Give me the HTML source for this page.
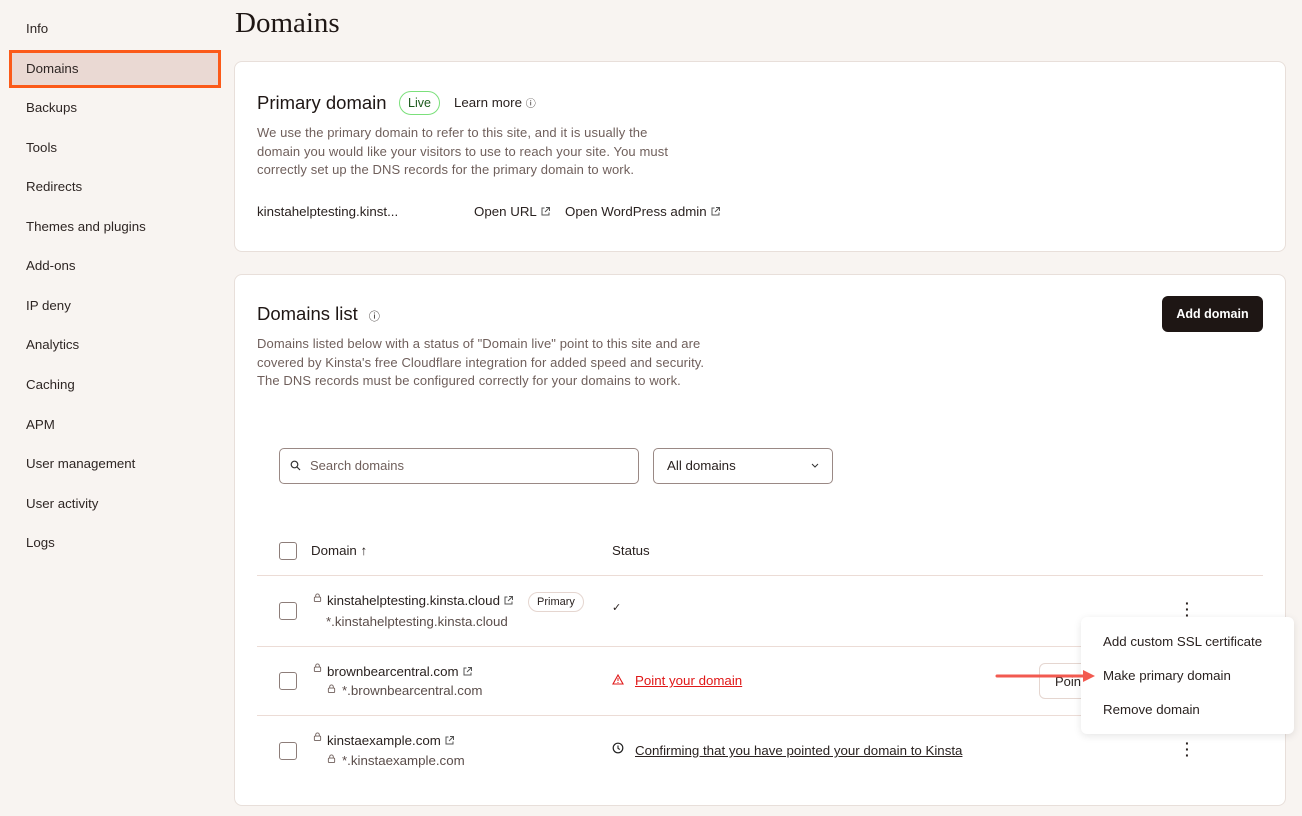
<!DOCTYPE html>
<html><head><meta charset="utf-8"><style>
*{box-sizing:border-box;margin:0;padding:0}
body{width:1302px;height:816px;background:#f8f4f1;font-family:"Liberation Sans",sans-serif;color:#2a2220;position:relative;overflow:hidden}
.a{position:absolute;white-space:nowrap}
.nav{left:26px;font-size:13.3px;color:#2e2624}
.card{position:absolute;background:#fff;border:1px solid #e8dfda;border-radius:8px}
.muted{color:#6f5f5b;font-size:13px;line-height:18.5px;letter-spacing:0.1px}
.cb{position:absolute;width:18px;height:18px;border:1.3px solid #8d7d79;border-radius:3px;background:#fff}
.sm{font-size:13.3px;color:#2a2220}
.sub{font-size:13.3px;color:#5a4d4a}
hr{position:absolute;border:0;border-top:1px solid #ecdcd6;left:257px;width:1006px;height:0}
.ext{display:inline-block;vertical-align:-1px;margin-left:3px}
</style></head><body>
<svg width="0" height="0" style="position:absolute"><defs>
<symbol id="ext" viewBox="0 0 11 11"><path d="M4.5 2H2v7h7V6.5M6 1.5h3.5V5M9.5 1.5L5 6" fill="none" stroke="#555" stroke-width="1"/></symbol>
<symbol id="lock" viewBox="0 0 10 10"><rect x="1.5" y="4.5" width="7" height="5" rx="1" fill="none" stroke="#6f5f5b" stroke-width="1"/><path d="M3 4.5V3a2 2 0 0 1 4 0v1.5" fill="none" stroke="#6f5f5b" stroke-width="1"/></symbol>
</defs></svg>
<div class="a nav" style="top:21px">Info</div>
<div class="a" style="left:9px;top:50px;width:212px;height:38px;background:#ead9d3;border:3px solid #fb5a19"></div>
<div class="a nav" style="top:61px">Domains</div>
<div class="a nav" style="top:100px">Backups</div>
<div class="a nav" style="top:140px">Tools</div>
<div class="a nav" style="top:179px">Redirects</div>
<div class="a nav" style="top:219px">Themes and plugins</div>
<div class="a nav" style="top:258px">Add-ons</div>
<div class="a nav" style="top:298px">IP deny</div>
<div class="a nav" style="top:337px">Analytics</div>
<div class="a nav" style="top:377px">Caching</div>
<div class="a nav" style="top:417px">APM</div>
<div class="a nav" style="top:456px">User management</div>
<div class="a nav" style="top:496px">User activity</div>
<div class="a nav" style="top:535px">Logs</div>

<div class="a" style="left:235px;top:7px;font-family:'Liberation Serif',serif;font-size:29px;color:#1e1614">Domains</div>

<div class="card" style="left:234px;top:61px;width:1052px;height:191px"></div>
<div class="a" style="left:257px;top:92px;font-size:18.5px;color:#1e1614">Primary domain</div>
<div class="a" style="left:399px;top:91px;height:24px;padding:0 8px;border:1px solid #7be07b;border-radius:12px;font-size:12.5px;line-height:22px;color:#1d5a1d">Live</div>
<div class="a sm" style="left:454px;top:95px">Learn more <span style="font-size:10px">ⓘ</span></div>
<div class="a muted" style="left:257px;top:124px">We use the primary domain to refer to this site, and it is usually the<br>domain you would like your visitors to use to reach your site. You must<br>correctly set up the DNS records for the primary domain to work.</div>
<div class="a sm" style="left:257px;top:204px">kinstahelptesting.kinst...</div>
<div class="a sm" style="left:474px;top:204px">Open URL<svg class="ext" width="11" height="11"><use href="#ext"/></svg></div>
<div class="a sm" style="left:565px;top:204px">Open WordPress admin<svg class="ext" width="11" height="11"><use href="#ext"/></svg></div>

<div class="card" style="left:234px;top:274px;width:1052px;height:532px"></div>
<div class="a" style="left:257px;top:303px;font-size:18.5px;color:#1e1614">Domains list <span style="font-size:11px;margin-left:6px">ⓘ</span></div>
<div class="a" style="left:1162px;top:296px;width:101px;height:36px;background:#1e1614;border-radius:6px;color:#fff;font-size:12.5px;font-weight:bold;text-align:center;line-height:36px">Add domain</div>
<div class="a muted" style="left:257px;top:335px">Domains listed below with a status of "Domain live" point to this site and are<br>covered by Kinsta's free Cloudflare integration for added speed and security.<br>The DNS records must be configured correctly for your domains to work.</div>

<div class="a" style="left:279px;top:448px;width:360px;height:36px;border:1px solid #9a8985;border-radius:5px;background:#fff"></div>
<svg class="a" style="left:290px;top:460px" width="11" height="11" viewBox="0 0 11 11"><circle cx="4.5" cy="4.5" r="3.3" fill="none" stroke="#333" stroke-width="1.2"/><path d="M7 7l3 3" stroke="#333" stroke-width="1.2"/></svg>
<div class="a" style="left:310px;top:458px;font-size:13px;color:#6f5f5b">Search domains</div>
<div class="a" style="left:653px;top:448px;width:180px;height:36px;border:1px solid #9a8985;border-radius:5px;background:#fff"></div>
<div class="a sm" style="left:667px;top:458px">All domains</div>
<svg class="a" style="left:811px;top:463px" width="8" height="5"><path d="M1 1l3 3 3-3" fill="none" stroke="#333"/></svg>

<div class="cb" style="left:279px;top:542px"></div>
<div class="a sm" style="left:311px;top:543px">Domain ↑</div>
<div class="a sm" style="left:612px;top:543px">Status</div>
<hr style="top:575px">
<hr style="top:646px">
<hr style="top:715px">

<div class="cb" style="left:279px;top:602px"></div>
<svg class="a" style="left:313px;top:593px" width="9" height="9"><use href="#lock"/></svg>
<div class="a sm" style="left:327px;top:593px">kinstahelptesting.kinsta.cloud<svg class="ext" width="11" height="11"><use href="#ext"/></svg></div>
<div class="a" style="left:528px;top:592px;height:20px;padding:0 8px;border:1px solid #e5d6d0;border-radius:10px;font-size:11px;line-height:18px">Primary</div>
<div class="a sub" style="left:326px;top:614px">*.kinstahelptesting.kinsta.cloud</div>
<div class="a" style="left:612px;top:601px;font-size:11px">✓</div>
<div class="a" style="left:1185px;top:600px;font-size:14px;font-weight:bold;line-height:6px">·<br>·<br>·</div>

<div class="cb" style="left:279px;top:672px"></div>
<svg class="a" style="left:313px;top:663px" width="9" height="9"><use href="#lock"/></svg>
<div class="a sm" style="left:327px;top:664px">brownbearcentral.com<svg class="ext" width="11" height="11"><use href="#ext"/></svg></div>
<svg class="a" style="left:327px;top:684px" width="9" height="9"><use href="#lock"/></svg>
<div class="a sub" style="left:342px;top:683px">*.brownbearcentral.com</div>
<svg class="a" style="left:612px;top:674px" width="12" height="11" viewBox="0 0 12 11"><path d="M6 1L11 10H1Z" fill="none" stroke="#e01818" stroke-width="1.1"/><path d="M6 4v3M6 8v1" stroke="#e01818"/></svg>
<div class="a" style="left:635px;top:673px;font-size:13.3px;color:#e01818;text-decoration:underline">Point your domain</div>
<div class="a" style="left:1039px;top:663px;width:60px;height:36px;border:1px solid #e5d6d0;border-radius:6px;background:#fff;font-size:13px;padding:10px 0 0 15px">Poin</div>

<div class="cb" style="left:279px;top:742px"></div>
<svg class="a" style="left:313px;top:732px" width="9" height="9"><use href="#lock"/></svg>
<div class="a sm" style="left:327px;top:733px">kinstaexample.com<svg class="ext" width="11" height="11"><use href="#ext"/></svg></div>
<svg class="a" style="left:327px;top:754px" width="9" height="9"><use href="#lock"/></svg>
<div class="a sub" style="left:342px;top:753px">*.kinstaexample.com</div>
<svg class="a" style="left:612px;top:742px" width="12" height="12" viewBox="0 0 12 12"><circle cx="6" cy="6" r="4.8" fill="none" stroke="#222" stroke-width="1.2"/><path d="M6 3.5V6.3L7.8 7.5" fill="none" stroke="#222" stroke-width="1.1"/></svg>
<div class="a sm" style="left:635px;top:743px;text-decoration:underline">Confirming that you have pointed your domain to Kinsta</div>
<div class="a" style="left:1185px;top:740px;font-size:14px;font-weight:bold;line-height:6px">·<br>·<br>·</div>

<div class="a" style="left:1081px;top:617px;width:213px;height:117px;background:#fff;border-radius:6px;box-shadow:0 2px 8px rgba(0,0,0,.1)"></div>
<div class="a sm" style="left:1103px;top:634px">Add custom SSL certificate</div>
<div class="a sm" style="left:1103px;top:668px">Make primary domain</div>
<div class="a sm" style="left:1103px;top:702px">Remove domain</div>
<svg class="a" style="left:995px;top:669px" width="105" height="14"><path d="M2 7H92" stroke="#f25a50" stroke-width="3" stroke-linecap="round"/><path d="M88 1L100 7L88 13Z" fill="#f25a50"/></svg>
</body></html>
